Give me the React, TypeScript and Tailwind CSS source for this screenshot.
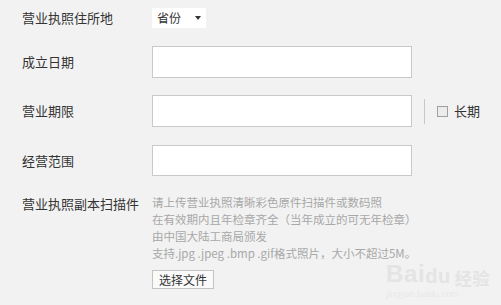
const FONT = { fontFamily: '"Microsoft YaHei", "Noto Sans CJK SC", sans-serif' };

const HINTS = [
  "请上传营业执照清晰彩色原件扫描件或数码照",
  "在有效期内且年检章齐全（当年成立的可无年检章）",
  "由中国大陆工商局颁发",
  "支持.jpg .jpeg .bmp .gif格式照片，大小不超过5M。",
];

function Label({ children }: { children: React.ReactNode }) {
  return <div className="w-[130px] shrink-0 text-[13px] text-[#333]">{children}</div>;
}

function TextBox({ h = "h-8" }: { h?: string }) {
  return <div className={`w-[260px] ${h} border border-[#c9c9c9] bg-white`} />;
}

export default function App() {
  return (
    <div
      className="relative h-[305px] w-[501px] overflow-hidden bg-[#f2f2f2] pl-[22px] pt-2"
      style={FONT}
    >
      {/* 住所地 */}
      <div className="flex h-5 items-center">
        <Label>营业执照住所地</Label>
        <div className="flex h-5 w-[54px] items-center justify-between bg-white pl-[5px] pr-[5px] text-[12px] text-[#333]">
          <span>省份</span>
          <span className="h-0 w-0 border-x-[3px] border-t-[4px] border-x-transparent border-t-[#333]" />
        </div>
      </div>

      {/* 成立日期 */}
      <div className="mt-[18px] flex items-center">
        <Label>成立日期</Label>
        <TextBox />
      </div>

      {/* 营业期限 */}
      <div className="mt-[17px] flex items-center">
        <Label>营业期限</Label>
        <TextBox />
        <div className="ml-3 h-[25px] w-px bg-[#c8c8c8]" />
        <div className="ml-3 h-[11px] w-[11px] border border-[#a0a0a0] bg-[#ececec]" />
        <span className="ml-[6px] text-[13px] text-[#333]">长期</span>
      </div>

      {/* 经营范围 */}
      <div className="mt-[18px] flex items-center">
        <Label>经营范围</Label>
        <TextBox h="h-[31px]" />
      </div>

      {/* 副本扫描件 */}
      <div className="mt-[18px] flex items-start">
        <div className="w-[130px] shrink-0 pt-[1px] text-[13px] leading-[17px] text-[#333]">
          营业执照副本扫描件
        </div>
        <div>
          {HINTS.map((t) => (
            <div key={t} className="text-[11.5px] leading-[17px] text-[#a8a8a8]">
              {t}
            </div>
          ))}
          <button className="mt-2 flex h-[19px] w-[62px] items-center justify-center border border-[#c4c4c4] bg-[#fafafa] text-[12px] text-[#333]">
            选择文件
          </button>
        </div>
      </div>

      {/* 水印 */}
      <div className="absolute left-[386px] top-[262px] select-none text-[#e4e4e4]">
        <div className="flex items-end text-[24px] font-bold leading-none tracking-wide" style={{ fontFamily: '"Liberation Sans", sans-serif' }}>
          <span>Bai</span>
          <span className="text-[20px]">du</span>
          <span className="ml-1 text-[17px]" style={FONT}>经验</span>
        </div>
        <div className="mt-[2px] text-[9px] text-[#e8e8e8]" style={{ fontFamily: '"Liberation Sans", sans-serif' }}>
          jingyan.baidu.com
        </div>
      </div>
    </div>
  );
}
